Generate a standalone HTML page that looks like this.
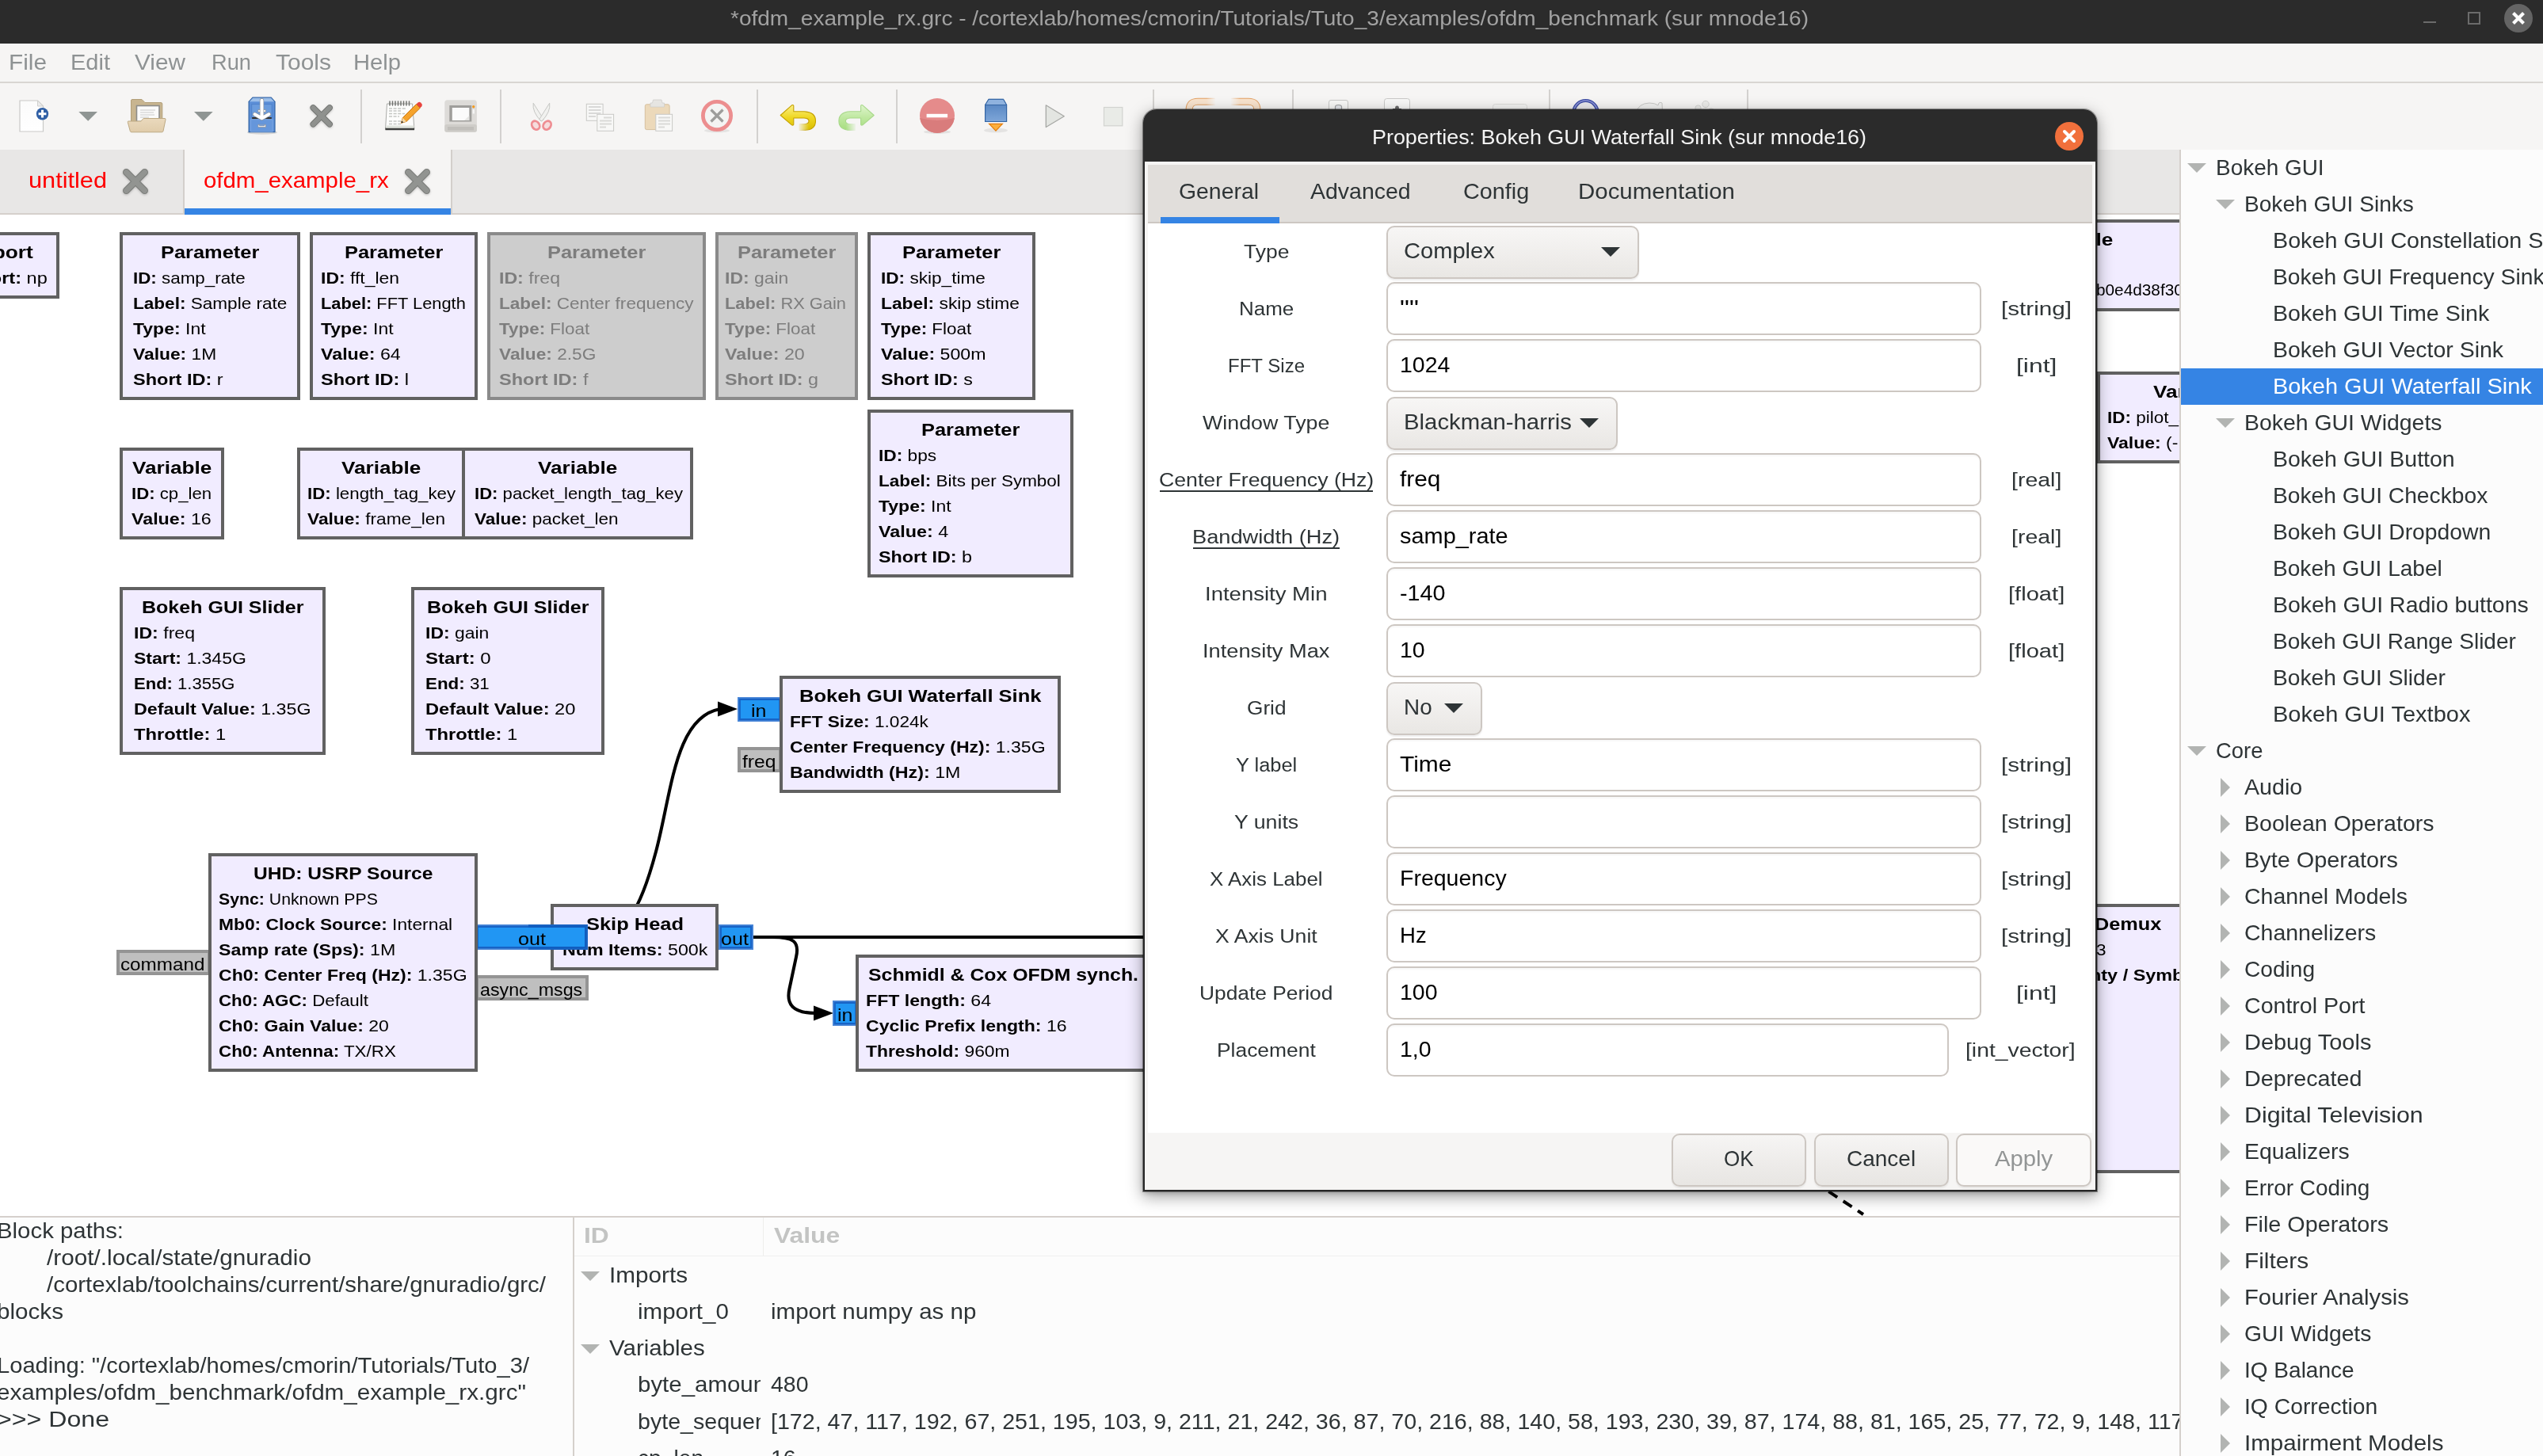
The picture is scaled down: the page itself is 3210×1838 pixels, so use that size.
<!DOCTYPE html>
<html><head><meta charset="utf-8"><title>GNU Radio Companion</title>
<style>
html,body{margin:0;padding:0;background:#f6f5f4}
body{width:3210px;height:1838px;font-family:"Liberation Sans",sans-serif}
#root{position:relative;width:3210px;height:1838px;overflow:hidden;background:#f6f5f4}
.r{position:absolute;display:block}
.t{position:absolute;white-space:pre;transform-origin:0 0;display:block}
b{font-weight:bold}
</style></head>
<body>
<div id="root">
<div class="r" style="left:0px;top:0px;width:3210px;height:1838px;background:#f6f5f4;"></div>
<div class="r" style="left:0px;top:0px;width:3210px;height:55px;background:#2b2b2b;"></div>
<div class="r" style="left:0px;top:55px;width:3210px;height:1px;background:#fbfbfa;"></div>
<span class="t" style="left:922.0px;top:10.9px;font-size:25.46px;line-height:25.46px;color:#a2a2a2;transform:scaleX(1.1012);">*ofdm_example_rx.grc - /cortexlab/homes/cmorin/Tutorials/Tuto_3/examples/ofdm_benchmark (sur mnode16)</span>
<div class="r" style="left:3059px;top:26.5px;width:16px;height:2.5px;background:#6b6b6b;"></div>
<div class="r" style="left:3115px;top:15px;width:16px;height:16px;background:transparent;border:2px solid #6b6b6b;box-sizing:border-box"></div>
<svg class="r" style="left:3161px;top:5px" width="36" height="36" viewBox="0 0 36 36"><circle cx="18" cy="18" r="18" fill="#646464"/><path d="M11.5 11.5 L24.5 24.5 M24.5 11.5 L11.5 24.5" stroke="#fff" stroke-width="4.2" stroke-linecap="butt"/></svg>
<div class="r" style="left:0px;top:103px;width:3210px;height:2px;background:#d9d6d2;"></div>
<span class="t" style="left:10.9px;top:65.1px;font-size:27.60px;line-height:27.60px;color:#8e9293;transform:scaleX(1.0794);">File</span>
<span class="t" style="left:88.9px;top:65.1px;font-size:27.60px;line-height:27.60px;color:#8e9293;transform:scaleX(1.0512);">Edit</span>
<span class="t" style="left:170.2px;top:65.1px;font-size:27.60px;line-height:27.60px;color:#8e9293;transform:scaleX(1.0790);">View</span>
<span class="t" style="left:266.6px;top:65.1px;font-size:27.60px;line-height:27.60px;color:#8e9293;transform:scaleX(0.9877);">Run</span>
<span class="t" style="left:347.5px;top:65.1px;font-size:27.60px;line-height:27.60px;color:#8e9293;transform:scaleX(1.0866);">Tools</span>
<span class="t" style="left:446.2px;top:65.1px;font-size:27.60px;line-height:27.60px;color:#8e9293;transform:scaleX(1.0570);">Help</span>
<svg class="r" style="left:0;top:105px" width="2752" height="84" viewBox="0 105 2752 84">
<defs>
<linearGradient id="gy" x1="0" y1="0" x2="0" y2="1"><stop offset="0" stop-color="#fbf08a"/><stop offset=".5" stop-color="#efd722"/><stop offset="1" stop-color="#d9bd00"/></linearGradient>
<linearGradient id="gg" x1="0" y1="0" x2="0" y2="1"><stop offset="0" stop-color="#dff5cd"/><stop offset=".5" stop-color="#bfe8a0"/><stop offset="1" stop-color="#a6dd80"/></linearGradient>
<linearGradient id="gb" x1="0" y1="0" x2="0" y2="1"><stop offset="0" stop-color="#4f7fbd"/><stop offset="1" stop-color="#7ea6d8"/></linearGradient>
<linearGradient id="gfade" x1="0" y1="0" x2="1" y2="0"><stop offset="0" stop-color="#f6f5f4" stop-opacity="1"/><stop offset="1" stop-color="#f6f5f4" stop-opacity="0"/></linearGradient>
<linearGradient id="gfade2" x1="1" y1="0" x2="0" y2="0"><stop offset="0" stop-color="#f6f5f4" stop-opacity="1"/><stop offset="1" stop-color="#f6f5f4" stop-opacity="0"/></linearGradient>
<linearGradient id="gpg" x1="0" y1="0" x2="0" y2="1"><stop offset="0" stop-color="#fbfbfb"/><stop offset="1" stop-color="#ffffff"/></linearGradient>
<linearGradient id="gfold" x1="0" y1="0" x2="0" y2="1"><stop offset="0" stop-color="#ead9bd"/><stop offset="1" stop-color="#e0ccaa"/></linearGradient>
</defs>
<!-- separators -->
<g fill="#d3d1cf"><rect x="455" y="113" width="2" height="68"/><rect x="631" y="113" width="2" height="68"/><rect x="955" y="113" width="2" height="68"/><rect x="1131" y="113" width="2" height="68"/><rect x="1455" y="113" width="2" height="68"/><rect x="1631" y="113" width="2" height="68"/><rect x="1955" y="113" width="2" height="68"/><rect x="2205" y="113" width="2" height="68"/></g>
<!-- new document -->
<path d="M25 127 H47.5 L54.5 134 V166 H25 Z" fill="url(#gpg)" stroke="#c9c9c7" stroke-width="1.2"/>
<path d="M47.5 127 V134 H54.5 Z" fill="#ececec" stroke="#cfcfcd" stroke-width="1"/>
<circle cx="53.5" cy="143.7" r="7.7" fill="#2f5fa5"/>
<path d="M53.5 138.8 V148.6 M48.6 143.7 H58.4" stroke="#fff" stroke-width="3"/>
<!-- dropdown arrows -->
<path d="M99.3 141 H123 L111.2 152.8 Z" fill="#8f9593"/>
<path d="M245 141 H268.7 L256.8 152.8 Z" fill="#8f9593"/>
<!-- folder open -->
<path d="M165.5 127 Q165.5 125.5 167 125.5 H179 L183 129.5 H203 Q204.8 129.5 204.8 131 V156 H165.5 Z" fill="#c8b590" stroke="#b29f78" stroke-width="1"/>
<rect x="172.5" y="133.5" width="28.5" height="20" fill="#fbfbfb" stroke="#8d8d8b" stroke-width="1.6"/>
<path d="M177 139 H196 M177 142 H194 M177 145 H195 M177 148 H188" stroke="#c9c9c9" stroke-width="1"/>
<path d="M162 153 H178 L181 149.5 H208 Q209.3 149.5 209 151 L206 165.5 Q205.7 166.8 204.3 166.8 H166 Q164.6 166.8 164.3 165.5 L161.3 154.3 Q161 153 162 153 Z" fill="url(#gfold)" stroke="#bda983" stroke-width="1"/>
<!-- save (file cabinet) -->
<ellipse cx="331" cy="167.2" rx="19" ry="2.6" fill="#000" opacity=".12"/>
<path d="M314.1 128.300 L318.9 123.1 H342.3 L347 128.300 V166.700 H314.100 Z" fill="#5b8ed7" stroke="#3465a4" stroke-width="1.2" stroke-linejoin="round"/>
<path d="M315 128.200 L319.200 123.8 H342 L346.100 128.200 Z" fill="#9dbfe9"/>
<rect x="317.700" y="131.600" width="25.5" height="16.400" fill="#6b9cdd" stroke="#4f82cb" stroke-width="1"/>
<rect x="318.200" y="148" width="24.600" height="2.200" fill="#33302c"/>
<rect x="316.600" y="150.800" width="27.500" height="15.300" fill="#6596db" stroke="#7fa9e3" stroke-width=".9"/>
<path d="M325.800 157.300 H335.400 V160.600 H325.800 Z" fill="#fafafa" stroke="#8a8f98" stroke-width=".8"/>
<path d="M327.300 157.300 V158.900 H333.900 V157.300" fill="#6596db" stroke="#8a8f98" stroke-width=".6"/>
<path d="M325.800 138.500 H335.400 V141.500 H325.800 Z" fill="#fafafa" stroke="#8a8f98" stroke-width=".8"/>
<g fill="none" stroke-linecap="round" stroke-linejoin="round"><path d="M330.500 126.700 V147.500 M321.600 144.300 L330.500 149.200 L339.400 144.300" stroke="#8c9199" stroke-width="5.4"/><path d="M330.500 126.700 V147.500 M321.600 144.300 L330.500 149.200 L339.400 144.300" stroke="#ffffff" stroke-width="4"/></g>
<!-- close X -->
<g style="filter:drop-shadow(0 1.8px 1.6px rgba(0,0,0,.2))"><path d="M395.300 136 L416.100 156.800 M416.100 136 L395.300 156.800" stroke="#6f716e" stroke-width="7.6" stroke-linecap="round"/>
<path d="M395.300 136 L416.100 156.800 M416.100 136 L395.300 156.800" stroke="#8f918e" stroke-width="6" stroke-linecap="round"/></g>
<!-- notepad + pencil -->
<path d="M488.5 131 H520.5 L523 163.5 H486.5 Z" fill="#fdfdfc" stroke="#a9aaa7" stroke-width="1"/>
<path d="M486.5 161.5 H523 V164.3 H486.5 Z" fill="#3c3d3b"/>
<path d="M487.5 158.5 H522.5 V161.5 H487.5 Z" fill="#dfe3dc"/>
<path d="M491 137 H512 M491 140 H506 M491 143.5 H511 M491 147 H504 M491 153 H510 M491 156.5 H508" stroke="#c4c6c2" stroke-width="1.3" stroke-dasharray="4 1.6"/>
<path d="M492 128 V133 M495.5 128 V133 M499 128 V133 M502.5 128 V133 M506 128 V133 M509.5 128 V133 M513 128 V133 M516.5 128 V133" stroke="#6f716e" stroke-width="1.5" stroke-linecap="round"/>
<path d="M506.4 155.3 L508.3 148.7 L525.5 131.5 L530.3 136.3 L513 153.4 Z" fill="#f5a32c" stroke="#c9740b" stroke-width="1"/>
<path d="M525.5 131.5 L527.8 129.3 Q529.5 128 531 129.5 L532.4 131 Q533.6 132.6 532.3 134.2 L530.3 136.3 Z" fill="#e8433e"/>
<path d="M506.4 155.3 L508.3 148.7 L513 153.4 Z" fill="#f2d7a8"/>
<path d="M506.4 155.3 L507.2 152.6 L509.2 154.5 Z" fill="#222"/>
<!-- screen / printer like -->
<rect x="561.3" y="126.2" width="40.6" height="40.6" rx="3.5" fill="#dddbd8"/>
<rect x="561.3" y="157" width="40.6" height="9.8" rx="2.5" fill="#cfcdc9"/>
<rect x="565" y="160" width="33" height="4.5" fill="#c1bfbb"/>
<rect x="567.3" y="133" width="28" height="20.5" fill="#9f9e9b"/>
<rect x="570.8" y="136" width="21.5" height="16" fill="#fbfbfb"/>
<path d="M592.3 146 V152 H586 Z" fill="#e6e6e4"/>
<circle cx="597.7" cy="134.8" r="1.7" fill="#f39a1f"/>
<rect x="596.6" y="138" width="2.4" height="5.5" fill="#f5f5f5"/>
<!-- scissors (insensitive) -->
<path d="M673.2 130.2 Q671.5 141 683 153 L686.3 150.8 Z" fill="#f1f1ef" stroke="#c6c7c4" stroke-width="1"/>
<path d="M693.7 130.2 Q695.4 141 683.9 153 L680.6 150.8 Z" fill="#f1f1ef" stroke="#c6c7c4" stroke-width="1"/>
<ellipse cx="676.2" cy="158.2" rx="4.6" ry="5.8" fill="#f6dcdd" stroke="#ee8d92" stroke-width="2.8" transform="rotate(-35 676.2 158.2)"/>
<ellipse cx="690.6" cy="158.2" rx="4.6" ry="5.8" fill="#f6dcdd" stroke="#ee8d92" stroke-width="2.8" transform="rotate(35 690.6 158.2)"/>
<!-- copy (insensitive) -->
<g stroke="#c8c8c6" stroke-width="1" fill="#f8f8f7"><rect x="740.3" y="131.3" width="20.8" height="21"/><rect x="753.8" y="144.3" width="20.8" height="21"/></g>
<path d="M743 135 H758.5 M743 139 H758.5 M743 143 H758.5 M743 147 H752 " stroke="#d9d9d8" stroke-width="2"/>
<path d="M762 148.5 H772 M757 152.5 H772 M757 156.5 H772 M757 160.5 H765" stroke="#d9d9d8" stroke-width="2"/>
<!-- paste -->
<rect x="814.3" y="131.8" width="30.8" height="31.8" rx="2" fill="#ecd9ba" stroke="#d6bf9d" stroke-width="1"/>
<path d="M824.5 126 H835 L836 130 H838.5 V135 H821 V130 H823.5 Z" fill="#e6e5e2" stroke="#cfcecb" stroke-width=".8"/>
<rect x="827.8" y="144.3" width="20.8" height="21" fill="#f8f8f7" stroke="#c8c8c6" stroke-width="1"/>
<path d="M831 148.5 H846 M831 152.5 H846 M831 156.5 H846 M831 160.5 H839" stroke="#d9d9d8" stroke-width="2"/>
<!-- delete -->
<ellipse cx="905" cy="165" rx="16" ry="2.4" fill="#000" opacity=".07"/>
<circle cx="905" cy="146" r="17.6" fill="#f4f4f3" stroke="#ec8e8f" stroke-width="4.8"/>
<path d="M897.5 138.5 L912.5 153.5 M912.5 138.5 L897.5 153.5" stroke="#9d9d9b" stroke-width="3.2"/>
<!-- undo -->
<path d="M985.2 145.5 L999.5 132.8 Q1001.2 131.8 1001.8 133.5 V140.8 H1015 Q1029.5 141.5 1029.5 152.7 Q1029.5 164 1015 164.4 H1009 V156.8 H1015 Q1021 156.3 1021 152.7 Q1021 149.3 1015 149 H1001.8 V157 Q1001.2 158.8 999.5 157.8 Z" fill="url(#gy)" stroke="#c4a000" stroke-width="1.1" stroke-linejoin="round"/>
<rect x="1007" y="155.5" width="14" height="10.5" fill="url(#gfade)"/>
<!-- redo (insensitive) -->
<path d="M1103.2 145.5 L1088.9 132.8 Q1087.2 131.8 1086.6 133.5 V140.8 H1073.4 Q1058.9 141.5 1058.9 152.7 Q1058.9 164 1073.4 164.4 H1079.4 V156.8 H1073.4 Q1067.4 156.3 1067.4 152.7 Q1067.4 149.3 1073.4 149 H1086.6 V157 Q1087.2 158.8 1088.9 157.8 Z" fill="url(#gg)" stroke="#a8d88a" stroke-width="1.1" stroke-linejoin="round"/>
<rect x="1067.5" y="155.5" width="14" height="10.5" fill="url(#gfade2)"/>
<!-- red minus -->
<ellipse cx="1183" cy="166.5" rx="17" ry="2.6" fill="#000" opacity=".08"/>
<circle cx="1183" cy="146" r="22" fill="#e58b8b"/>
<path d="M1161.2 149 Q1183 155 1204.8 149 A22 22 0 0 1 1161.2 149 Z" fill="#d97c7c"/>
<rect x="1169.6" y="143.8" width="26.5" height="4.5" fill="#fff"/>
<!-- blue box + orange -->
<ellipse cx="1257" cy="164.5" rx="15" ry="3" fill="#000" opacity=".07"/>
<path d="M1243.6 132.5 L1248 125.4 H1266.5 L1270.6 132.5 V153.5 H1243.6 Z" fill="url(#gb)" stroke="#3465a4" stroke-width="1.2"/>
<path d="M1243.6 132.5 L1248 125.4 H1266.5 L1270.6 132.5 Z" fill="#8fb2de" stroke="#3465a4" stroke-width="1"/>
<path d="M1248.6 156.4 H1265.4 L1257 165.2 Z" fill="#fcaf3e" stroke="#e27b0a" stroke-width="1.2"/>
<!-- play / stop (insensitive) -->
<path d="M1320.3 132.8 L1343.3 146.8 L1320.3 160.5 Z" fill="#e3e5e1" stroke="#a7a8a5" stroke-width="1.3" stroke-linejoin="round"/>
<rect x="1393.5" y="135.5" width="23.3" height="23.3" fill="#e9ebe7" stroke="#d2d3d0" stroke-width="1.2"/>
<!-- slivers above dialog -->
<defs><linearGradient id="gof1" x1="0" y1="0" x2="1" y2="0"><stop offset="0" stop-color="#f6f5f4" stop-opacity="0"/><stop offset=".55" stop-color="#f6f5f4" stop-opacity="0"/><stop offset="1" stop-color="#f6f5f4" stop-opacity="1"/></linearGradient>
<linearGradient id="gof2" x1="1" y1="0" x2="0" y2="0"><stop offset="0" stop-color="#f6f5f4" stop-opacity="0"/><stop offset=".55" stop-color="#f6f5f4" stop-opacity="0"/><stop offset="1" stop-color="#f6f5f4" stop-opacity="1"/></linearGradient></defs>
<g fill="none"><path d="M1501.200 144 V138 Q1501.500 128.250 1512 128.250 H1534" stroke="#e3a062" stroke-width="9.2"/><path d="M1501.200 144 V138 Q1501.500 128.250 1512 128.250 H1534" stroke="#f9e4ce" stroke-width="7.2"/>
<path d="M1586.800 144 V138 Q1586.500 128.250 1576 128.250 H1554" stroke="#e3a062" stroke-width="9.2"/><path d="M1586.800 144 V138 Q1586.500 128.250 1576 128.250 H1554" stroke="#f9e4ce" stroke-width="7.2"/></g>
<rect x="1508" y="122" width="27" height="14" fill="url(#gof1)"/><rect x="1553" y="122" width="27" height="14" fill="url(#gof2)"/>
<rect x="1677.5" y="126.5" width="24" height="18" rx="2.5" fill="#f8f8f7" stroke="#c9c9c7" stroke-width="1"/>
<path d="M1685.5 141 V135 Q1685.5 132.5 1689.5 132.5 Q1693.5 132.500 1693.5 135 V141" fill="#e7e9ee" stroke="#9fa1a3" stroke-width="1.2"/>
<rect x="1747.5" y="124.5" width="32" height="20" rx="3" fill="#f8f8f7" stroke="#c9c9c7" stroke-width="1"/>
<path d="M1758 140 V137 H1761 Q1761 133.6 1763.5 133.6 Q1766 133.6 1766 137 H1769 V140 Z" fill="#6c6c6c"/>
<rect x="1884.500" y="131.5" width="43" height="14" rx="3" fill="#f4f4f3" stroke="#dddddb" stroke-width="1"/>
<circle cx="2001.5" cy="142" r="15" fill="#e9e9ec" stroke="#3a4aa2" stroke-width="4.2"/>
<circle cx="2001.5" cy="142" r="15" fill="none" stroke="#8b93d6" stroke-width="1.6"/>
<path d="M2065.500 142 Q2068 130.5 2082 130 Q2089 130 2093 133 L2094 130 Q2096 128.500 2098 130 L2098.5 142 Z" fill="#f1f1f0" stroke="#c9c9c7" stroke-width="1"/>
<circle cx="2153" cy="131.500" r="4.2" fill="#ececea" stroke="#d4d4d2" stroke-width="1"/>
<circle cx="2143.5" cy="136.5" r="3.6" fill="#ececea" stroke="#d4d4d2" stroke-width="1"/>
<circle cx="2160" cy="141" r="4" fill="#ececea" stroke="#d4d4d2" stroke-width="1"/>
</svg>

<div class="r" style="left:0px;top:189px;width:2752px;height:81px;background:#e8e7e6;"></div>
<div class="r" style="left:0px;top:269px;width:2752px;height:2px;background:#d5d0cc;"></div>
<div class="r" style="left:232px;top:189px;width:338px;height:81px;background:#f6f5f4;"></div>
<div class="r" style="left:231px;top:189px;width:2px;height:81px;background:#d3cfcb;"></div>
<div class="r" style="left:569px;top:189px;width:2px;height:81px;background:#d3cfcb;"></div>
<div class="r" style="left:233px;top:263px;width:336px;height:8px;background:#3584e4;"></div>
<span class="t" style="left:36.2px;top:214.2px;font-size:27.60px;line-height:27.60px;color:#ff0000;transform:scaleX(1.1126);">untitled</span>
<span class="t" style="left:256.6px;top:214.2px;font-size:27.60px;line-height:27.60px;color:#ff0000;transform:scaleX(1.0653);">ofdm_example_rx</span>
<svg class="r" style="left:154px;top:212px;filter:drop-shadow(0 1.6px 1.4px rgba(0,0,0,.22))" width="34" height="34" viewBox="0 0 34 34"><path d="M5.4 5.4 L28.6 28.6 M28.6 5.4 L5.4 28.6" stroke="#7c7e7b" stroke-width="8.8" stroke-linecap="round"/><path d="M5.4 5.4 L28.6 28.6 M28.6 5.4 L5.4 28.6" stroke="#929491" stroke-width="6.6" stroke-linecap="round"/></svg>
<svg class="r" style="left:510px;top:212px;filter:drop-shadow(0 1.6px 1.4px rgba(0,0,0,.22))" width="34" height="34" viewBox="0 0 34 34"><path d="M5.4 5.4 L28.6 28.6 M28.6 5.4 L5.4 28.6" stroke="#7c7e7b" stroke-width="8.8" stroke-linecap="round"/><path d="M5.4 5.4 L28.6 28.6 M28.6 5.4 L5.4 28.6" stroke="#929491" stroke-width="6.6" stroke-linecap="round"/></svg>
<div class="r" style="left:0;top:271px;width:2752px;height:1264px;background:#fff;overflow:hidden">
<svg class="r" style="left:0;top:0" width="2752" height="1264" viewBox="0 271 2752 1264"><g fill="none" stroke="#000" stroke-width="4"><path d="M951 1183 H2700"/><path d="M951 1183 H975 C1001 1183 1009.5 1188 1005 1208 L996.5 1248 C992 1268 1001 1279 1030 1279"/><path d="M742 1183 C790 1183 808 1150 828 1075 C848 1000 852 905 909 895"/><path d="M2290 1492 L2352 1533" stroke-dasharray="13 9"/></g><path d="M1052 1279 L1027 1269.5 V1288.5 Z" fill="#000"/><path d="M931 895 L906 885.5 V904.5 Z" fill="#000"/></svg>
<div class="r" style="left:-74px;top:22px;width:149px;height:84px;background:#f1ecff;border:4px solid #616161;box-sizing:border-box"></div>
<span class="t" style="left:-40.4px;top:36.8px;font-size:22.08px;line-height:22.08px;color:#000;transform:scaleX(1.1904);"><b>Import</b></span>
<span class="t" style="left:-54.0px;top:70.0px;font-size:20.70px;line-height:20.70px;color:#000;transform:scaleX(1.1373);"><b>Import:</b> np</span>
<div class="r" style="left:151px;top:22px;width:228px;height:212px;background:#f1ecff;border:4px solid #616161;box-sizing:border-box"></div>
<span class="t" style="left:202.8px;top:36.8px;font-size:22.08px;line-height:22.08px;color:#000;transform:scaleX(1.1510);"><b>Parameter</b></span>
<span class="t" style="left:167.5px;top:70.0px;font-size:20.70px;line-height:20.70px;color:#000;transform:scaleX(1.0813);"><b>ID:</b> samp_rate</span>
<span class="t" style="left:167.5px;top:102.0px;font-size:20.70px;line-height:20.70px;color:#000;transform:scaleX(1.0907);"><b>Label:</b> Sample rate</span>
<span class="t" style="left:167.5px;top:134.0px;font-size:20.70px;line-height:20.70px;color:#000;transform:scaleX(1.1113);"><b>Type:</b> Int</span>
<span class="t" style="left:167.5px;top:166.0px;font-size:20.70px;line-height:20.70px;color:#000;transform:scaleX(1.1029);"><b>Value:</b> 1M</span>
<span class="t" style="left:167.5px;top:198.0px;font-size:20.70px;line-height:20.70px;color:#000;transform:scaleX(1.1368);"><b>Short ID:</b> r</span>
<div class="r" style="left:391px;top:22px;width:212px;height:212px;background:#f1ecff;border:4px solid #616161;box-sizing:border-box"></div>
<span class="t" style="left:434.8px;top:36.8px;font-size:22.08px;line-height:22.08px;color:#000;transform:scaleX(1.1510);"><b>Parameter</b></span>
<span class="t" style="left:405.0px;top:70.0px;font-size:20.70px;line-height:20.70px;color:#000;transform:scaleX(1.1092);"><b>ID:</b> fft_len</span>
<span class="t" style="left:405.0px;top:102.0px;font-size:20.70px;line-height:20.70px;color:#000;transform:scaleX(1.0552);"><b>Label:</b> FFT Length</span>
<span class="t" style="left:405.0px;top:134.0px;font-size:20.70px;line-height:20.70px;color:#000;transform:scaleX(1.1113);"><b>Type:</b> Int</span>
<span class="t" style="left:405.0px;top:166.0px;font-size:20.70px;line-height:20.70px;color:#000;transform:scaleX(1.1236);"><b>Value:</b> 64</span>
<span class="t" style="left:405.0px;top:198.0px;font-size:20.70px;line-height:20.70px;color:#000;transform:scaleX(1.1367);"><b>Short ID:</b> l</span>
<div class="r" style="left:615px;top:22px;width:276px;height:212px;background:#cdcdcd;border:4px solid #8a8a8a;box-sizing:border-box"></div>
<span class="t" style="left:690.8px;top:36.8px;font-size:22.08px;line-height:22.08px;color:#7d7d7d;transform:scaleX(1.1510);"><b>Parameter</b></span>
<span class="t" style="left:630.0px;top:70.0px;font-size:20.70px;line-height:20.70px;color:#7d7d7d;transform:scaleX(1.1173);"><b>ID:</b> freq</span>
<span class="t" style="left:630.0px;top:102.0px;font-size:20.70px;line-height:20.70px;color:#7d7d7d;transform:scaleX(1.0899);"><b>Label:</b> Center frequency</span>
<span class="t" style="left:630.0px;top:134.0px;font-size:20.70px;line-height:20.70px;color:#7d7d7d;transform:scaleX(1.0834);"><b>Type:</b> Float</span>
<span class="t" style="left:630.0px;top:166.0px;font-size:20.70px;line-height:20.70px;color:#7d7d7d;transform:scaleX(1.0966);"><b>Value:</b> 2.5G</span>
<span class="t" style="left:630.0px;top:198.0px;font-size:20.70px;line-height:20.70px;color:#7d7d7d;transform:scaleX(1.1382);"><b>Short ID:</b> f</span>
<div class="r" style="left:903px;top:22px;width:180px;height:212px;background:#cdcdcd;border:4px solid #8a8a8a;box-sizing:border-box"></div>
<span class="t" style="left:930.8px;top:36.8px;font-size:22.08px;line-height:22.08px;color:#7d7d7d;transform:scaleX(1.1510);"><b>Parameter</b></span>
<span class="t" style="left:915.0px;top:70.0px;font-size:20.70px;line-height:20.70px;color:#7d7d7d;transform:scaleX(1.1093);"><b>ID:</b> gain</span>
<span class="t" style="left:915.0px;top:102.0px;font-size:20.70px;line-height:20.70px;color:#7d7d7d;transform:scaleX(1.0559);"><b>Label:</b> RX Gain</span>
<span class="t" style="left:915.0px;top:134.0px;font-size:20.70px;line-height:20.70px;color:#7d7d7d;transform:scaleX(1.0834);"><b>Type:</b> Float</span>
<span class="t" style="left:915.0px;top:166.0px;font-size:20.70px;line-height:20.70px;color:#7d7d7d;transform:scaleX(1.1236);"><b>Value:</b> 20</span>
<span class="t" style="left:915.0px;top:198.0px;font-size:20.70px;line-height:20.70px;color:#7d7d7d;transform:scaleX(1.1287);"><b>Short ID:</b> g</span>
<div class="r" style="left:1095px;top:22px;width:212px;height:212px;background:#f1ecff;border:4px solid #616161;box-sizing:border-box"></div>
<span class="t" style="left:1138.8px;top:36.8px;font-size:22.08px;line-height:22.08px;color:#000;transform:scaleX(1.1510);"><b>Parameter</b></span>
<span class="t" style="left:1112.0px;top:70.0px;font-size:20.70px;line-height:20.70px;color:#000;transform:scaleX(1.0925);"><b>ID:</b> skip_time</span>
<span class="t" style="left:1112.0px;top:102.0px;font-size:20.70px;line-height:20.70px;color:#000;transform:scaleX(1.1027);"><b>Label:</b> skip stime</span>
<span class="t" style="left:1112.0px;top:134.0px;font-size:20.70px;line-height:20.70px;color:#000;transform:scaleX(1.0834);"><b>Type:</b> Float</span>
<span class="t" style="left:1112.0px;top:166.0px;font-size:20.70px;line-height:20.70px;color:#000;transform:scaleX(1.1188);"><b>Value:</b> 500m</span>
<span class="t" style="left:1112.0px;top:198.0px;font-size:20.70px;line-height:20.70px;color:#000;transform:scaleX(1.1198);"><b>Short ID:</b> s</span>
<div class="r" style="left:1095px;top:246px;width:260px;height:212px;background:#f1ecff;border:4px solid #616161;box-sizing:border-box"></div>
<span class="t" style="left:1162.8px;top:260.8px;font-size:22.08px;line-height:22.08px;color:#000;transform:scaleX(1.1510);"><b>Parameter</b></span>
<span class="t" style="left:1109.0px;top:294.0px;font-size:20.70px;line-height:20.70px;color:#000;transform:scaleX(1.0965);"><b>ID:</b> bps</span>
<span class="t" style="left:1109.0px;top:326.0px;font-size:20.70px;line-height:20.70px;color:#000;transform:scaleX(1.0866);"><b>Label:</b> Bits per Symbol</span>
<span class="t" style="left:1109.0px;top:358.0px;font-size:20.70px;line-height:20.70px;color:#000;transform:scaleX(1.1113);"><b>Type:</b> Int</span>
<span class="t" style="left:1109.0px;top:390.0px;font-size:20.70px;line-height:20.70px;color:#000;transform:scaleX(1.1286);"><b>Value:</b> 4</span>
<span class="t" style="left:1109.0px;top:422.0px;font-size:20.70px;line-height:20.70px;color:#000;transform:scaleX(1.1287);"><b>Short ID:</b> b</span>
<div class="r" style="left:151px;top:294px;width:132px;height:116px;background:#f1ecff;border:4px solid #616161;box-sizing:border-box"></div>
<span class="t" style="left:166.9px;top:308.8px;font-size:22.08px;line-height:22.08px;color:#000;transform:scaleX(1.1826);"><b>Variable</b></span>
<span class="t" style="left:166.0px;top:342.0px;font-size:20.70px;line-height:20.70px;color:#000;transform:scaleX(1.0723);"><b>ID:</b> cp_len</span>
<span class="t" style="left:166.0px;top:374.0px;font-size:20.70px;line-height:20.70px;color:#000;transform:scaleX(1.1236);"><b>Value:</b> 16</span>
<div class="r" style="left:375px;top:294px;width:212px;height:116px;background:#f1ecff;border:4px solid #616161;box-sizing:border-box"></div>
<span class="t" style="left:430.9px;top:308.8px;font-size:22.08px;line-height:22.08px;color:#000;transform:scaleX(1.1826);"><b>Variable</b></span>
<span class="t" style="left:387.5px;top:342.0px;font-size:20.70px;line-height:20.70px;color:#000;transform:scaleX(1.0776);"><b>ID:</b> length_tag_key</span>
<span class="t" style="left:387.5px;top:374.0px;font-size:20.70px;line-height:20.70px;color:#000;transform:scaleX(1.0971);"><b>Value:</b> frame_len</span>
<div class="r" style="left:583px;top:294px;width:292px;height:116px;background:#f1ecff;border:4px solid #616161;box-sizing:border-box"></div>
<span class="t" style="left:678.9px;top:308.8px;font-size:22.08px;line-height:22.08px;color:#000;transform:scaleX(1.1826);"><b>Variable</b></span>
<span class="t" style="left:598.5px;top:342.0px;font-size:20.70px;line-height:20.70px;color:#000;transform:scaleX(1.0684);"><b>ID:</b> packet_length_tag_key</span>
<span class="t" style="left:598.5px;top:374.0px;font-size:20.70px;line-height:20.70px;color:#000;transform:scaleX(1.0893);"><b>Value:</b> packet_len</span>
<div class="r" style="left:151px;top:470px;width:260px;height:212px;background:#f1ecff;border:4px solid #616161;box-sizing:border-box"></div>
<span class="t" style="left:178.8px;top:484.8px;font-size:22.08px;line-height:22.08px;color:#000;transform:scaleX(1.1334);"><b>Bokeh GUI Slider</b></span>
<span class="t" style="left:169.0px;top:518.0px;font-size:20.70px;line-height:20.70px;color:#000;transform:scaleX(1.1173);"><b>ID:</b> freq</span>
<span class="t" style="left:169.0px;top:550.0px;font-size:20.70px;line-height:20.70px;color:#000;transform:scaleX(1.1111);"><b>Start:</b> 1.345G</span>
<span class="t" style="left:169.0px;top:582.0px;font-size:20.70px;line-height:20.70px;color:#000;transform:scaleX(1.0651);"><b>End:</b> 1.355G</span>
<span class="t" style="left:169.0px;top:614.0px;font-size:20.70px;line-height:20.70px;color:#000;transform:scaleX(1.1236);"><b>Default Value:</b> 1.35G</span>
<span class="t" style="left:169.0px;top:646.0px;font-size:20.70px;line-height:20.70px;color:#000;transform:scaleX(1.1499);"><b>Throttle:</b> 1</span>
<div class="r" style="left:519px;top:470px;width:244px;height:212px;background:#f1ecff;border:4px solid #616161;box-sizing:border-box"></div>
<span class="t" style="left:538.8px;top:484.8px;font-size:22.08px;line-height:22.08px;color:#000;transform:scaleX(1.1334);"><b>Bokeh GUI Slider</b></span>
<span class="t" style="left:537.0px;top:518.0px;font-size:20.70px;line-height:20.70px;color:#000;transform:scaleX(1.1093);"><b>ID:</b> gain</span>
<span class="t" style="left:537.0px;top:550.0px;font-size:20.70px;line-height:20.70px;color:#000;transform:scaleX(1.1601);"><b>Start:</b> 0</span>
<span class="t" style="left:537.0px;top:582.0px;font-size:20.70px;line-height:20.70px;color:#000;transform:scaleX(1.0808);"><b>End:</b> 31</span>
<span class="t" style="left:537.0px;top:614.0px;font-size:20.70px;line-height:20.70px;color:#000;transform:scaleX(1.1442);"><b>Default Value:</b> 20</span>
<span class="t" style="left:537.0px;top:646.0px;font-size:20.70px;line-height:20.70px;color:#000;transform:scaleX(1.1499);"><b>Throttle:</b> 1</span>
<div class="r" style="left:931px;top:609px;width:56px;height:31px;background:#2196f3;box-shadow:inset 0 0 0 1.8px #4a87d8,inset 0 0 0 3.9px #1763c6"></div>
<span class="t" style="left:948.3px;top:615.5px;font-size:22.08px;line-height:22.08px;color:#000;transform:scaleX(1.1309);">in</span>
<div class="r" style="left:931px;top:672px;width:56px;height:32px;background:#bfbfbf;box-shadow:inset 0 0 0 4px #949494"></div>
<span class="t" style="left:936.8px;top:679.5px;font-size:22.08px;line-height:22.08px;color:#000;transform:scaleX(1.1162);">freq</span>
<div class="r" style="left:984px;top:582px;width:355px;height:148px;background:#f1ecff;border:4px solid #616161;box-sizing:border-box"></div>
<span class="t" style="left:1008.8px;top:596.8px;font-size:22.08px;line-height:22.08px;color:#000;transform:scaleX(1.1564);"><b>Bokeh GUI Waterfall Sink</b></span>
<span class="t" style="left:997.0px;top:630.0px;font-size:20.70px;line-height:20.70px;color:#000;transform:scaleX(1.0943);"><b>FFT Size:</b> 1.024k</span>
<span class="t" style="left:997.0px;top:662.0px;font-size:20.70px;line-height:20.70px;color:#000;transform:scaleX(1.1134);"><b>Center Frequency (Hz):</b> 1.35G</span>
<span class="t" style="left:997.0px;top:694.0px;font-size:20.70px;line-height:20.70px;color:#000;transform:scaleX(1.1224);"><b>Bandwidth (Hz):</b> 1M</span>
<div class="r" style="left:907px;top:896px;width:44px;height:32px;background:#2196f3;box-shadow:inset 0 0 0 1.8px #4a87d8,inset 0 0 0 3.9px #1763c6"></div>
<span class="t" style="left:910.0px;top:903.5px;font-size:22.08px;line-height:22.08px;color:#000;transform:scaleX(1.1374);">out</span>
<div class="r" style="left:695px;top:870px;width:212px;height:84px;background:#f1ecff;border:4px solid #616161;box-sizing:border-box"></div>
<span class="t" style="left:739.5px;top:884.8px;font-size:22.08px;line-height:22.08px;color:#000;transform:scaleX(1.1520);"><b>Skip Head</b></span>
<span class="t" style="left:709.5px;top:918.0px;font-size:20.70px;line-height:20.70px;color:#000;transform:scaleX(1.1233);"><b>Num Items:</b> 500k</span>
<div class="r" style="left:147px;top:928px;width:119px;height:32px;background:#bfbfbf;box-shadow:inset 0 0 0 4px #949494"></div>
<span class="t" style="left:151.8px;top:935.5px;font-size:22.08px;line-height:22.08px;color:#000;transform:scaleX(1.0980);">command</span>
<div class="r" style="left:600px;top:896px;width:142px;height:32px;background:#2196f3;box-shadow:inset 0 0 0 1.8px #4a87d8,inset 0 0 0 3.9px #1763c6"></div>
<span class="t" style="left:653.5px;top:903.5px;font-size:22.08px;line-height:22.08px;color:#000;transform:scaleX(1.1374);">out</span>
<div class="r" style="left:667px;top:896px;width:75px;height:32px;background:transparent;border:4px solid #0f5bbd;border-left:none;box-sizing:border-box;opacity:.8"></div>
<div class="r" style="left:600px;top:960px;width:143px;height:32px;background:#bfbfbf;box-shadow:inset 0 0 0 4px #949494"></div>
<span class="t" style="left:606.4px;top:967.5px;font-size:22.08px;line-height:22.08px;color:#000;transform:scaleX(1.0532);">async_msgs</span>
<div class="r" style="left:263px;top:806px;width:340px;height:276px;background:#f1ecff;border:4px solid #616161;box-sizing:border-box"></div>
<span class="t" style="left:319.8px;top:820.8px;font-size:22.08px;line-height:22.08px;color:#000;transform:scaleX(1.1142);"><b>UHD: USRP Source</b></span>
<span class="t" style="left:275.5px;top:854.0px;font-size:20.70px;line-height:20.70px;color:#000;transform:scaleX(1.0274);"><b>Sync:</b> Unknown PPS</span>
<span class="t" style="left:275.5px;top:886.0px;font-size:20.70px;line-height:20.70px;color:#000;transform:scaleX(1.1017);"><b>Mb0: Clock Source:</b> Internal</span>
<span class="t" style="left:275.5px;top:918.0px;font-size:20.70px;line-height:20.70px;color:#000;transform:scaleX(1.1228);"><b>Samp rate (Sps):</b> 1M</span>
<span class="t" style="left:275.5px;top:950.0px;font-size:20.70px;line-height:20.70px;color:#000;transform:scaleX(1.1133);"><b>Ch0: Center Freq (Hz):</b> 1.35G</span>
<span class="t" style="left:275.5px;top:982.0px;font-size:20.70px;line-height:20.70px;color:#000;transform:scaleX(1.0790);"><b>Ch0: AGC:</b> Default</span>
<span class="t" style="left:275.5px;top:1014.0px;font-size:20.70px;line-height:20.70px;color:#000;transform:scaleX(1.1123);"><b>Ch0: Gain Value:</b> 20</span>
<span class="t" style="left:275.5px;top:1046.0px;font-size:20.70px;line-height:20.70px;color:#000;transform:scaleX(1.0818);"><b>Ch0: Antenna:</b> TX/RX</span>
<div class="r" style="left:1051px;top:992px;width:32px;height:32px;background:#2196f3;box-shadow:inset 0 0 0 1.8px #4a87d8,inset 0 0 0 3.9px #1763c6"></div>
<span class="t" style="left:1057.3px;top:999.5px;font-size:22.08px;line-height:22.08px;color:#000;transform:scaleX(1.1309);">in</span>
<div class="r" style="left:1080px;top:934px;width:372px;height:148px;background:#f1ecff;border:4px solid #616161;box-sizing:border-box"></div>
<span class="t" style="left:1095.5px;top:948.8px;font-size:22.08px;line-height:22.08px;color:#000;transform:scaleX(1.1254);"><b>Schmidl &amp; Cox OFDM synch.</b></span>
<span class="t" style="left:1093.0px;top:982.0px;font-size:20.70px;line-height:20.70px;color:#000;transform:scaleX(1.1181);"><b>FFT length:</b> 64</span>
<span class="t" style="left:1093.0px;top:1014.0px;font-size:20.70px;line-height:20.70px;color:#000;transform:scaleX(1.1139);"><b>Cyclic Prefix length:</b> 16</span>
<span class="t" style="left:1093.0px;top:1046.0px;font-size:20.70px;line-height:20.70px;color:#000;transform:scaleX(1.1046);"><b>Threshold:</b> 960m</span>
<div class="r" style="left:2400px;top:6px;width:500px;height:116px;background:#f1ecff;border:4px solid #616161;box-sizing:border-box"></div>
<span class="t" style="left:2567.4px;top:20.8px;font-size:22.08px;line-height:22.08px;color:#000;transform:scaleX(1.1826);"><b>Variable</b></span>
<span class="t" style="left:2645.5px;top:85.0px;font-size:20.70px;line-height:20.70px;color:#000;transform:scaleX(1.0045);">b0e4d38f30a5</span>
<div class="r" style="left:2647px;top:198px;width:253px;height:116px;background:#f1ecff;border:4px solid #616161;box-sizing:border-box"></div>
<span class="t" style="left:2718.4px;top:212.8px;font-size:22.08px;line-height:22.08px;color:#000;transform:scaleX(1.1826);"><b>Variable</b></span>
<span class="t" style="left:2660.0px;top:246.0px;font-size:20.70px;line-height:20.70px;color:#000;transform:scaleX(1.0864);"><b>ID:</b> pilot_symbols</span>
<span class="t" style="left:2660.0px;top:278.0px;font-size:20.70px;line-height:20.70px;color:#000;transform:scaleX(1.1104);"><b>Value:</b> (-1, 1, 1)</span>
<div class="r" style="left:2400px;top:870px;width:500px;height:340px;background:#f1ecff;border:4px solid #616161;box-sizing:border-box"></div>
<span class="t" style="left:2643.8px;top:884.8px;font-size:22.08px;line-height:22.08px;color:#000;transform:scaleX(1.1454);"><b>Demux</b></span>
<span class="t" style="left:2646.0px;top:917.5px;font-size:20.70px;line-height:20.70px;color:#000;transform:scaleX(1.0879);">3</span>
<span class="t" style="left:2637.5px;top:949.5px;font-size:20.70px;line-height:20.70px;color:#000;transform:scaleX(1.1319);"><b>nty / Symbol:</b></span>
</div>
<div class="r" style="left:0px;top:1535px;width:2752px;height:2px;background:#d5d0cc;"></div>
<div class="r" style="left:0px;top:1537px;width:2752px;height:301px;background:#fcfcfc;"></div>
<div class="r" style="left:723px;top:1537px;width:2px;height:301px;background:#d5d0cc;"></div>
<div class="r" style="left:0;top:1537px;width:723px;height:301px;overflow:hidden">
<span class="t" style="left:-4.0px;top:2.6px;font-size:27.60px;line-height:27.60px;color:#2e3436;transform:scaleX(1.0644);">Block paths:</span>
<span class="t" style="left:59.0px;top:36.7px;font-size:27.60px;line-height:27.60px;color:#2e3436;transform:scaleX(1.0779);">/root/.local/state/gnuradio</span>
<span class="t" style="left:59.0px;top:70.8px;font-size:27.60px;line-height:27.60px;color:#2e3436;transform:scaleX(1.0668);">/cortexlab/toolchains/current/share/gnuradio/grc/</span>
<span class="t" style="left:-4.0px;top:104.9px;font-size:27.60px;line-height:27.60px;color:#2e3436;transform:scaleX(1.0739);">blocks</span>
<span class="t" style="left:-4.0px;top:173.1px;font-size:27.60px;line-height:27.60px;color:#2e3436;transform:scaleX(1.0556);">Loading: "/cortexlab/homes/cmorin/Tutorials/Tuto_3/</span>
<span class="t" style="left:-4.0px;top:207.2px;font-size:27.60px;line-height:27.60px;color:#2e3436;transform:scaleX(1.0744);">examples/ofdm_benchmark/ofdm_example_rx.grc"</span>
<span class="t" style="left:-4.0px;top:241.3px;font-size:27.60px;line-height:27.60px;color:#2e3436;transform:scaleX(1.1641);">&gt;&gt;&gt; Done</span>
</div>
<div class="r" style="left:725px;top:1537px;width:2026px;height:301px;overflow:hidden">
<div class="r" style="left:238px;top:0px;width:1px;height:48px;background:#eeeeec;"></div>
<div class="r" style="left:0px;top:48px;width:2026px;height:1px;background:#f0f0ef;"></div>
<span class="t" style="left:12.0px;top:9.4px;font-size:27.60px;line-height:27.60px;color:#c3c4c3;transform:scaleX(1.1481);"><b>ID</b></span>
<span class="t" style="left:251.5px;top:9.4px;font-size:27.60px;line-height:27.60px;color:#c3c4c3;transform:scaleX(1.1532);"><b>Value</b></span>
<div class="r" style="left:0;top:0;width:234.5px;height:301px;overflow:hidden">
<svg class="r" style="left:8px;top:67.7px" width="24" height="12" viewBox="0 0 24 12"><path d="M0 0 H24 L12 12 Z" fill="#b2b4b2"/></svg>
<span class="t" style="left:43.8px;top:58.8px;font-size:27.60px;line-height:27.60px;color:#2e3436;transform:scaleX(1.0761);">Imports</span>
<span class="t" style="left:80.3px;top:105.0px;font-size:27.60px;line-height:27.60px;color:#2e3436;transform:scaleX(1.0697);">import_0</span>
<svg class="r" style="left:8px;top:160.1px" width="24" height="12" viewBox="0 0 24 12"><path d="M0 0 H24 L12 12 Z" fill="#b2b4b2"/></svg>
<span class="t" style="left:43.8px;top:151.2px;font-size:27.60px;line-height:27.60px;color:#2e3436;transform:scaleX(1.0688);">Variables</span>
<span class="t" style="left:80.3px;top:197.4px;font-size:27.60px;line-height:27.60px;color:#2e3436;transform:scaleX(1.0673);">byte_amount</span>
<span class="t" style="left:80.3px;top:243.6px;font-size:27.60px;line-height:27.60px;color:#2e3436;transform:scaleX(1.0366);">byte_sequence</span>
<span class="t" style="left:80.3px;top:289.8px;font-size:27.60px;line-height:27.60px;color:#2e3436;transform:scaleX(1.0225);">cp_len</span>
</div>
<span class="t" style="left:248.4px;top:105.0px;font-size:27.60px;line-height:27.60px;color:#2e3436;transform:scaleX(1.0704);">import numpy as np</span>
<span class="t" style="left:248.4px;top:197.4px;font-size:27.60px;line-height:27.60px;color:#2e3436;transform:scaleX(1.0320);">480</span>
<span class="t" style="left:248.4px;top:243.6px;font-size:27.60px;line-height:27.60px;color:#2e3436;transform:scaleX(1.0370);">[172, 47, 117, 192, 67, 251, 195, 103, 9, 211, 21, 242, 36, 87, 70, 216, 88, 140, 58, 193, 230, 39, 87, 174, 88, 81, 165, 25, 77, 72, 9, 148, 117, 200, 14</span>
<span class="t" style="left:248.4px;top:289.8px;font-size:27.60px;line-height:27.60px;color:#2e3436;transform:scaleX(1.0318);">16</span>
</div>
<div class="r" style="left:2751px;top:189px;width:2px;height:1649px;background:#d5d0cc;"></div>
<div class="r" style="left:2753px;top:189px;width:457px;height:1649px;background:#fcfcfc;overflow:hidden">
<svg class="r" style="left:8px;top:17.2px" width="24" height="12" viewBox="0 0 24 12"><path d="M0 0 H24 L12 12 Z" fill="#b2b4b2"/></svg>
<span class="t" style="left:44.2px;top:9.0px;font-size:27.60px;line-height:27.60px;color:#2e3436;transform:scaleX(1.0122);">Bokeh GUI</span>
<svg class="r" style="left:44px;top:63.2px" width="24" height="12" viewBox="0 0 24 12"><path d="M0 0 H24 L12 12 Z" fill="#b2b4b2"/></svg>
<span class="t" style="left:80.2px;top:55.0px;font-size:27.60px;line-height:27.60px;color:#2e3436;transform:scaleX(1.0178);">Bokeh GUI Sinks</span>
<span class="t" style="left:116.2px;top:101.0px;font-size:27.60px;line-height:27.60px;color:#2e3436;transform:scaleX(1.0403);">Bokeh GUI Constellation Sink</span>
<span class="t" style="left:116.2px;top:147.0px;font-size:27.60px;line-height:27.60px;color:#2e3436;transform:scaleX(1.0245);">Bokeh GUI Frequency Sink</span>
<span class="t" style="left:116.2px;top:193.0px;font-size:27.60px;line-height:27.60px;color:#2e3436;transform:scaleX(1.0359);">Bokeh GUI Time Sink</span>
<span class="t" style="left:116.2px;top:239.0px;font-size:27.60px;line-height:27.60px;color:#2e3436;transform:scaleX(1.0314);">Bokeh GUI Vector Sink</span>
<div class="r" style="left:0px;top:276px;width:457px;height:46px;background:#3584e4;"></div>
<span class="t" style="left:116.2px;top:285.0px;font-size:27.60px;line-height:27.60px;color:#ffffff;transform:scaleX(1.0477);">Bokeh GUI Waterfall Sink</span>
<svg class="r" style="left:44px;top:339.2px" width="24" height="12" viewBox="0 0 24 12"><path d="M0 0 H24 L12 12 Z" fill="#b2b4b2"/></svg>
<span class="t" style="left:80.2px;top:331.0px;font-size:27.60px;line-height:27.60px;color:#2e3436;transform:scaleX(1.0296);">Bokeh GUI Widgets</span>
<span class="t" style="left:116.2px;top:377.0px;font-size:27.60px;line-height:27.60px;color:#2e3436;transform:scaleX(1.0326);">Bokeh GUI Button</span>
<span class="t" style="left:116.2px;top:423.0px;font-size:27.60px;line-height:27.60px;color:#2e3436;transform:scaleX(1.0223);">Bokeh GUI Checkbox</span>
<span class="t" style="left:116.2px;top:469.0px;font-size:27.60px;line-height:27.60px;color:#2e3436;transform:scaleX(1.0254);">Bokeh GUI Dropdown</span>
<span class="t" style="left:116.2px;top:515.0px;font-size:27.60px;line-height:27.60px;color:#2e3436;transform:scaleX(1.0175);">Bokeh GUI Label</span>
<span class="t" style="left:116.2px;top:561.0px;font-size:27.60px;line-height:27.60px;color:#2e3436;transform:scaleX(1.0314);">Bokeh GUI Radio buttons</span>
<span class="t" style="left:116.2px;top:607.0px;font-size:27.60px;line-height:27.60px;color:#2e3436;transform:scaleX(1.0156);">Bokeh GUI Range Slider</span>
<span class="t" style="left:116.2px;top:653.0px;font-size:27.60px;line-height:27.60px;color:#2e3436;transform:scaleX(1.0216);">Bokeh GUI Slider</span>
<span class="t" style="left:116.2px;top:699.0px;font-size:27.60px;line-height:27.60px;color:#2e3436;transform:scaleX(1.0516);">Bokeh GUI Textbox</span>
<svg class="r" style="left:8px;top:753.2px" width="24" height="12" viewBox="0 0 24 12"><path d="M0 0 H24 L12 12 Z" fill="#b2b4b2"/></svg>
<span class="t" style="left:44.2px;top:745.0px;font-size:27.60px;line-height:27.60px;color:#2e3436;transform:scaleX(0.9931);">Core</span>
<svg class="r" style="left:50px;top:793.2px" width="12" height="24" viewBox="0 0 12 24"><path d="M0 0 V24 L12 12 Z" fill="#b2b4b2"/></svg>
<span class="t" style="left:80.2px;top:791.0px;font-size:27.60px;line-height:27.60px;color:#2e3436;transform:scaleX(1.0380);">Audio</span>
<svg class="r" style="left:50px;top:839.2px" width="12" height="24" viewBox="0 0 12 24"><path d="M0 0 V24 L12 12 Z" fill="#b2b4b2"/></svg>
<span class="t" style="left:80.2px;top:837.0px;font-size:27.60px;line-height:27.60px;color:#2e3436;transform:scaleX(1.0343);">Boolean Operators</span>
<svg class="r" style="left:50px;top:885.2px" width="12" height="24" viewBox="0 0 12 24"><path d="M0 0 V24 L12 12 Z" fill="#b2b4b2"/></svg>
<span class="t" style="left:80.2px;top:883.0px;font-size:27.60px;line-height:27.60px;color:#2e3436;transform:scaleX(1.0456);">Byte Operators</span>
<svg class="r" style="left:50px;top:931.2px" width="12" height="24" viewBox="0 0 12 24"><path d="M0 0 V24 L12 12 Z" fill="#b2b4b2"/></svg>
<span class="t" style="left:80.2px;top:929.0px;font-size:27.60px;line-height:27.60px;color:#2e3436;transform:scaleX(1.0326);">Channel Models</span>
<svg class="r" style="left:50px;top:977.2px" width="12" height="24" viewBox="0 0 12 24"><path d="M0 0 V24 L12 12 Z" fill="#b2b4b2"/></svg>
<span class="t" style="left:80.2px;top:975.0px;font-size:27.60px;line-height:27.60px;color:#2e3436;transform:scaleX(1.0326);">Channelizers</span>
<svg class="r" style="left:50px;top:1023.2px" width="12" height="24" viewBox="0 0 12 24"><path d="M0 0 V24 L12 12 Z" fill="#b2b4b2"/></svg>
<span class="t" style="left:80.2px;top:1021.0px;font-size:27.60px;line-height:27.60px;color:#2e3436;transform:scaleX(1.0188);">Coding</span>
<svg class="r" style="left:50px;top:1069.2px" width="12" height="24" viewBox="0 0 12 24"><path d="M0 0 V24 L12 12 Z" fill="#b2b4b2"/></svg>
<span class="t" style="left:80.2px;top:1067.0px;font-size:27.60px;line-height:27.60px;color:#2e3436;transform:scaleX(1.0355);">Control Port</span>
<svg class="r" style="left:50px;top:1115.2px" width="12" height="24" viewBox="0 0 12 24"><path d="M0 0 V24 L12 12 Z" fill="#b2b4b2"/></svg>
<span class="t" style="left:80.2px;top:1113.0px;font-size:27.60px;line-height:27.60px;color:#2e3436;transform:scaleX(1.0489);">Debug Tools</span>
<svg class="r" style="left:50px;top:1161.2px" width="12" height="24" viewBox="0 0 12 24"><path d="M0 0 V24 L12 12 Z" fill="#b2b4b2"/></svg>
<span class="t" style="left:80.2px;top:1159.0px;font-size:27.60px;line-height:27.60px;color:#2e3436;transform:scaleX(1.0408);">Deprecated</span>
<svg class="r" style="left:50px;top:1207.2px" width="12" height="24" viewBox="0 0 12 24"><path d="M0 0 V24 L12 12 Z" fill="#b2b4b2"/></svg>
<span class="t" style="left:80.2px;top:1205.0px;font-size:27.60px;line-height:27.60px;color:#2e3436;transform:scaleX(1.1010);">Digital Television</span>
<svg class="r" style="left:50px;top:1253.2px" width="12" height="24" viewBox="0 0 12 24"><path d="M0 0 V24 L12 12 Z" fill="#b2b4b2"/></svg>
<span class="t" style="left:80.2px;top:1251.0px;font-size:27.60px;line-height:27.60px;color:#2e3436;transform:scaleX(1.0296);">Equalizers</span>
<svg class="r" style="left:50px;top:1299.2px" width="12" height="24" viewBox="0 0 12 24"><path d="M0 0 V24 L12 12 Z" fill="#b2b4b2"/></svg>
<span class="t" style="left:80.2px;top:1297.0px;font-size:27.60px;line-height:27.60px;color:#2e3436;transform:scaleX(1.0125);">Error Coding</span>
<svg class="r" style="left:50px;top:1345.2px" width="12" height="24" viewBox="0 0 12 24"><path d="M0 0 V24 L12 12 Z" fill="#b2b4b2"/></svg>
<span class="t" style="left:80.2px;top:1343.0px;font-size:27.60px;line-height:27.60px;color:#2e3436;transform:scaleX(1.0419);">File Operators</span>
<svg class="r" style="left:50px;top:1391.2px" width="12" height="24" viewBox="0 0 12 24"><path d="M0 0 V24 L12 12 Z" fill="#b2b4b2"/></svg>
<span class="t" style="left:80.2px;top:1389.0px;font-size:27.60px;line-height:27.60px;color:#2e3436;transform:scaleX(1.0806);">Filters</span>
<svg class="r" style="left:50px;top:1437.2px" width="12" height="24" viewBox="0 0 12 24"><path d="M0 0 V24 L12 12 Z" fill="#b2b4b2"/></svg>
<span class="t" style="left:80.2px;top:1435.0px;font-size:27.60px;line-height:27.60px;color:#2e3436;transform:scaleX(1.0591);">Fourier Analysis</span>
<svg class="r" style="left:50px;top:1483.2px" width="12" height="24" viewBox="0 0 12 24"><path d="M0 0 V24 L12 12 Z" fill="#b2b4b2"/></svg>
<span class="t" style="left:80.2px;top:1481.0px;font-size:27.60px;line-height:27.60px;color:#2e3436;transform:scaleX(1.0254);">GUI Widgets</span>
<svg class="r" style="left:50px;top:1529.2px" width="12" height="24" viewBox="0 0 12 24"><path d="M0 0 V24 L12 12 Z" fill="#b2b4b2"/></svg>
<span class="t" style="left:80.2px;top:1527.0px;font-size:27.60px;line-height:27.60px;color:#2e3436;transform:scaleX(1.0153);">IQ Balance</span>
<svg class="r" style="left:50px;top:1575.2px" width="12" height="24" viewBox="0 0 12 24"><path d="M0 0 V24 L12 12 Z" fill="#b2b4b2"/></svg>
<span class="t" style="left:80.2px;top:1573.0px;font-size:27.60px;line-height:27.60px;color:#2e3436;transform:scaleX(1.0256);">IQ Correction</span>
<svg class="r" style="left:50px;top:1621.2px" width="12" height="24" viewBox="0 0 12 24"><path d="M0 0 V24 L12 12 Z" fill="#b2b4b2"/></svg>
<span class="t" style="left:80.2px;top:1619.0px;font-size:27.60px;line-height:27.60px;color:#2e3436;transform:scaleX(1.0717);">Impairment Models</span>
</div>
<!--DIALOG-->
<div class="r" style="left:1443px;top:138px;width:1204px;height:1366px;background:#f6f5f4;border-radius:17px 17px 0 0;box-shadow:0 0 0 1px rgba(0,0,0,.35),0 6px 20px 1px rgba(0,0,0,.36),0 2px 6px rgba(0,0,0,.18);overflow:hidden">
<div class="r" style="left:0px;top:0px;width:1204px;height:66px;background:#2b2b2b;"></div>
<span class="t" style="left:289.0px;top:22.9px;font-size:25.46px;line-height:25.46px;color:#f4f4f4;transform:scaleX(1.0570);">Properties: Bokeh GUI Waterfall Sink (sur mnode16)</span>
<svg class="r" style="left:1150.5px;top:16px" width="36" height="36" viewBox="0 0 36 36"><circle cx="18" cy="18" r="18" fill="#f1703c"/><path d="M12 12 L24 24 M24 12 L12 24" stroke="#fff" stroke-width="4" stroke-linecap="round"/></svg>
<div class="r" style="left:6px;top:70px;width:1192px;height:74px;background:#e1dedb;"></div>
<div class="r" style="left:6px;top:142px;width:1192px;height:2px;background:#cdc7c2;"></div>
<div class="r" style="left:22px;top:136px;width:150px;height:8px;background:#3584e4;"></div>
<div class="r" style="left:6px;top:144px;width:1192px;height:1148px;background:#ffffff;"></div>
<span class="t" style="left:45.3px;top:90.0px;font-size:27.60px;line-height:27.60px;color:#2e3436;transform:scaleX(1.0286);">General</span>
<span class="t" style="left:210.8px;top:90.0px;font-size:27.60px;line-height:27.60px;color:#2e3436;transform:scaleX(1.0325);">Advanced</span>
<span class="t" style="left:403.8px;top:90.0px;font-size:27.60px;line-height:27.60px;color:#2e3436;transform:scaleX(1.0426);">Config</span>
<span class="t" style="left:549.3px;top:90.0px;font-size:27.60px;line-height:27.60px;color:#2e3436;transform:scaleX(1.0668);">Documentation</span>
<span class="t" style="left:126.8px;top:167.8px;font-size:24.84px;line-height:24.84px;color:#2e3436;transform:scaleX(1.0667);">Type</span>
<div class="r" style="left:307px;top:147px;width:319px;height:67px;background:linear-gradient(#f7f6f5,#efedeb 60%,#e9e7e4);border:2px solid #cdc7c2;box-sizing:border-box;border-radius:10px;box-shadow:0 2px 2px rgba(0,0,0,.07)"></div>
<span class="t" style="left:329.0px;top:165.4px;font-size:27.60px;line-height:27.60px;color:#2e3436;transform:scaleX(1.0546);">Complex</span>
<svg class="r" style="left:578px;top:174px" width="24" height="12" viewBox="0 0 24 12"><path d="M0 0 H24 L12 12 Z" fill="#2e3436"/></svg>
<span class="t" style="left:120.8px;top:239.8px;font-size:24.84px;line-height:24.84px;color:#2e3436;transform:scaleX(1.0463);">Name</span>
<div class="r" style="left:307px;top:218.2px;width:751px;height:67px;background:#fff;border:2px solid #cdc7c2;box-sizing:border-box;border-radius:10px;box-shadow:inset 0 2px 2px rgba(0,0,0,.03)"></div>
<span class="t" style="left:323.5px;top:237.4px;font-size:27.60px;line-height:27.60px;color:#000;transform:scaleX(1.2126);">""</span>
<span class="t" style="left:1083.0px;top:239.8px;font-size:24.84px;line-height:24.84px;color:#2e3436;transform:scaleX(1.1957);">[string]</span>
<span class="t" style="left:107.0px;top:311.8px;font-size:24.84px;line-height:24.84px;color:#2e3436;transform:scaleX(0.9678);">FFT Size</span>
<div class="r" style="left:307px;top:290.2px;width:751px;height:67px;background:#fff;border:2px solid #cdc7c2;box-sizing:border-box;border-radius:10px;box-shadow:inset 0 2px 2px rgba(0,0,0,.03)"></div>
<span class="t" style="left:323.5px;top:309.4px;font-size:27.60px;line-height:27.60px;color:#000;transform:scaleX(1.0321);">1024</span>
<span class="t" style="left:1101.8px;top:311.8px;font-size:24.84px;line-height:24.84px;color:#2e3436;transform:scaleX(1.2860);">[int]</span>
<span class="t" style="left:75.3px;top:383.8px;font-size:24.84px;line-height:24.84px;color:#2e3436;transform:scaleX(1.0793);">Window Type</span>
<div class="r" style="left:307px;top:363px;width:292px;height:67px;background:linear-gradient(#f7f6f5,#efedeb 60%,#e9e7e4);border:2px solid #cdc7c2;box-sizing:border-box;border-radius:10px;box-shadow:0 2px 2px rgba(0,0,0,.07)"></div>
<span class="t" style="left:329.0px;top:381.4px;font-size:27.60px;line-height:27.60px;color:#2e3436;transform:scaleX(1.0628);">Blackman-harris</span>
<svg class="r" style="left:551px;top:390px" width="24" height="12" viewBox="0 0 24 12"><path d="M0 0 H24 L12 12 Z" fill="#2e3436"/></svg>
<span class="t" style="left:19.9px;top:455.8px;font-size:24.84px;line-height:24.84px;color:#2e3436;transform:scaleX(1.0742);">Center Frequency (Hz)</span>
<div class="r" style="left:20.87px;top:481px;width:269.26px;height:2px;background:#2e3436;"></div>
<div class="r" style="left:307px;top:434.2px;width:751px;height:67px;background:#fff;border:2px solid #cdc7c2;box-sizing:border-box;border-radius:10px;box-shadow:inset 0 2px 2px rgba(0,0,0,.03)"></div>
<span class="t" style="left:323.5px;top:453.4px;font-size:27.60px;line-height:27.60px;color:#000;transform:scaleX(1.0824);">freq</span>
<span class="t" style="left:1095.8px;top:455.8px;font-size:24.84px;line-height:24.84px;color:#2e3436;transform:scaleX(1.1478);">[real]</span>
<span class="t" style="left:62.4px;top:527.8px;font-size:24.84px;line-height:24.84px;color:#2e3436;transform:scaleX(1.0965);">Bandwidth (Hz)</span>
<div class="r" style="left:63.44px;top:553px;width:184.12px;height:2px;background:#2e3436;"></div>
<div class="r" style="left:307px;top:506.2px;width:751px;height:67px;background:#fff;border:2px solid #cdc7c2;box-sizing:border-box;border-radius:10px;box-shadow:inset 0 2px 2px rgba(0,0,0,.03)"></div>
<span class="t" style="left:323.5px;top:525.4px;font-size:27.60px;line-height:27.60px;color:#000;transform:scaleX(1.0479);">samp_rate</span>
<span class="t" style="left:1095.8px;top:527.8px;font-size:24.84px;line-height:24.84px;color:#2e3436;transform:scaleX(1.1478);">[real]</span>
<span class="t" style="left:78.3px;top:599.8px;font-size:24.84px;line-height:24.84px;color:#2e3436;transform:scaleX(1.1081);">Intensity Min</span>
<div class="r" style="left:307px;top:578.2px;width:751px;height:67px;background:#fff;border:2px solid #cdc7c2;box-sizing:border-box;border-radius:10px;box-shadow:inset 0 2px 2px rgba(0,0,0,.03)"></div>
<span class="t" style="left:323.5px;top:597.4px;font-size:27.60px;line-height:27.60px;color:#000;transform:scaleX(1.0396);">-140</span>
<span class="t" style="left:1091.9px;top:599.8px;font-size:24.84px;line-height:24.84px;color:#2e3436;transform:scaleX(1.1736);">[float]</span>
<span class="t" style="left:75.3px;top:671.8px;font-size:24.84px;line-height:24.84px;color:#2e3436;transform:scaleX(1.0965);">Intensity Max</span>
<div class="r" style="left:307px;top:650.2px;width:751px;height:67px;background:#fff;border:2px solid #cdc7c2;box-sizing:border-box;border-radius:10px;box-shadow:inset 0 2px 2px rgba(0,0,0,.03)"></div>
<span class="t" style="left:323.5px;top:669.4px;font-size:27.60px;line-height:27.60px;color:#000;transform:scaleX(1.0318);">10</span>
<span class="t" style="left:1091.9px;top:671.8px;font-size:24.84px;line-height:24.84px;color:#2e3436;transform:scaleX(1.1736);">[float]</span>
<span class="t" style="left:130.8px;top:743.8px;font-size:24.84px;line-height:24.84px;color:#2e3436;transform:scaleX(1.0553);">Grid</span>
<div class="r" style="left:307px;top:723px;width:121px;height:67px;background:linear-gradient(#f7f6f5,#efedeb 60%,#e9e7e4);border:2px solid #cdc7c2;box-sizing:border-box;border-radius:10px;box-shadow:0 2px 2px rgba(0,0,0,.07)"></div>
<span class="t" style="left:329.0px;top:741.4px;font-size:27.60px;line-height:27.60px;color:#2e3436;transform:scaleX(1.0102);">No</span>
<svg class="r" style="left:380px;top:750px" width="24" height="12" viewBox="0 0 24 12"><path d="M0 0 H24 L12 12 Z" fill="#2e3436"/></svg>
<span class="t" style="left:116.9px;top:815.8px;font-size:24.84px;line-height:24.84px;color:#2e3436;transform:scaleX(1.0232);">Y label</span>
<div class="r" style="left:307px;top:794.2px;width:751px;height:67px;background:#fff;border:2px solid #cdc7c2;box-sizing:border-box;border-radius:10px;box-shadow:inset 0 2px 2px rgba(0,0,0,.03)"></div>
<span class="t" style="left:323.5px;top:813.4px;font-size:27.60px;line-height:27.60px;color:#000;transform:scaleX(1.0836);">Time</span>
<span class="t" style="left:1083.0px;top:815.8px;font-size:24.84px;line-height:24.84px;color:#2e3436;transform:scaleX(1.1957);">[string]</span>
<span class="t" style="left:114.9px;top:887.8px;font-size:24.84px;line-height:24.84px;color:#2e3436;transform:scaleX(1.0757);">Y units</span>
<div class="r" style="left:307px;top:866.2px;width:751px;height:67px;background:#fff;border:2px solid #cdc7c2;box-sizing:border-box;border-radius:10px;box-shadow:inset 0 2px 2px rgba(0,0,0,.03)"></div>
<span class="t" style="left:1083.0px;top:887.8px;font-size:24.84px;line-height:24.84px;color:#2e3436;transform:scaleX(1.1957);">[string]</span>
<span class="t" style="left:84.2px;top:959.8px;font-size:24.84px;line-height:24.84px;color:#2e3436;transform:scaleX(1.0433);">X Axis Label</span>
<div class="r" style="left:307px;top:938.2px;width:751px;height:67px;background:#fff;border:2px solid #cdc7c2;box-sizing:border-box;border-radius:10px;box-shadow:inset 0 2px 2px rgba(0,0,0,.03)"></div>
<span class="t" style="left:323.5px;top:957.4px;font-size:27.60px;line-height:27.60px;color:#000;transform:scaleX(1.0327);">Frequency</span>
<span class="t" style="left:1083.0px;top:959.8px;font-size:24.84px;line-height:24.84px;color:#2e3436;transform:scaleX(1.1957);">[string]</span>
<span class="t" style="left:91.2px;top:1031.8px;font-size:24.84px;line-height:24.84px;color:#2e3436;transform:scaleX(1.0721);">X Axis Unit</span>
<div class="r" style="left:307px;top:1010.2px;width:751px;height:67px;background:#fff;border:2px solid #cdc7c2;box-sizing:border-box;border-radius:10px;box-shadow:inset 0 2px 2px rgba(0,0,0,.03)"></div>
<span class="t" style="left:323.5px;top:1029.4px;font-size:27.60px;line-height:27.60px;color:#000;transform:scaleX(0.9978);">Hz</span>
<span class="t" style="left:1083.0px;top:1031.8px;font-size:24.84px;line-height:24.84px;color:#2e3436;transform:scaleX(1.1957);">[string]</span>
<span class="t" style="left:71.3px;top:1103.8px;font-size:24.84px;line-height:24.84px;color:#2e3436;transform:scaleX(1.0603);">Update Period</span>
<div class="r" style="left:307px;top:1082.2px;width:751px;height:67px;background:#fff;border:2px solid #cdc7c2;box-sizing:border-box;border-radius:10px;box-shadow:inset 0 2px 2px rgba(0,0,0,.03)"></div>
<span class="t" style="left:323.5px;top:1101.4px;font-size:27.60px;line-height:27.60px;color:#000;transform:scaleX(1.0320);">100</span>
<span class="t" style="left:1101.8px;top:1103.8px;font-size:24.84px;line-height:24.84px;color:#2e3436;transform:scaleX(1.2860);">[int]</span>
<span class="t" style="left:93.1px;top:1175.8px;font-size:24.84px;line-height:24.84px;color:#2e3436;transform:scaleX(1.0633);">Placement</span>
<div class="r" style="left:307px;top:1154.2px;width:710px;height:67px;background:#fff;border:2px solid #cdc7c2;box-sizing:border-box;border-radius:10px;box-shadow:inset 0 2px 2px rgba(0,0,0,.03)"></div>
<span class="t" style="left:323.5px;top:1173.4px;font-size:27.60px;line-height:27.60px;color:#000;transform:scaleX(1.0323);">1,0</span>
<span class="t" style="left:1038.2px;top:1175.8px;font-size:24.84px;line-height:24.84px;color:#2e3436;transform:scaleX(1.1413);">[int_vector]</span>
<div class="r" style="left:1px;top:1292px;width:1203px;height:74px;background:#f6f5f4;"></div>
<div class="r" style="left:667px;top:1293px;width:170px;height:67px;background:linear-gradient(#f6f5f4,#edebe9 60%,#e8e6e3);border:2px solid #cdc7c2;box-sizing:border-box;border-radius:10px;box-shadow:0 2px 2px rgba(0,0,0,.06)"></div>
<span class="t" style="left:733.2px;top:1310.6px;font-size:27.60px;line-height:27.60px;color:#2e3436;transform:scaleX(0.9434);">OK</span>
<div class="r" style="left:847px;top:1293px;width:170px;height:67px;background:linear-gradient(#f6f5f4,#edebe9 60%,#e8e6e3);border:2px solid #cdc7c2;box-sizing:border-box;border-radius:10px;box-shadow:0 2px 2px rgba(0,0,0,.06)"></div>
<span class="t" style="left:888.4px;top:1310.6px;font-size:27.60px;line-height:27.60px;color:#2e3436;transform:scaleX(1.0141);">Cancel</span>
<div class="r" style="left:1026px;top:1293px;width:171px;height:67px;background:#faf9f8;border:2px solid #cdc7c2;box-sizing:border-box;border-radius:10px;box-shadow:0 2px 2px rgba(0,0,0,.06)"></div>
<span class="t" style="left:1074.9px;top:1310.6px;font-size:27.60px;line-height:27.60px;color:#929595;transform:scaleX(1.0613);">Apply</span>
<div class="r" style="left:0px;top:66px;width:2px;height:1300px;background:#262626;"></div>
<div class="r" style="left:1202px;top:66px;width:2px;height:1300px;background:#262626;"></div>
<div class="r" style="left:0px;top:1364px;width:1204px;height:2px;background:#262626;"></div>
</div>
</div>
</body></html>
